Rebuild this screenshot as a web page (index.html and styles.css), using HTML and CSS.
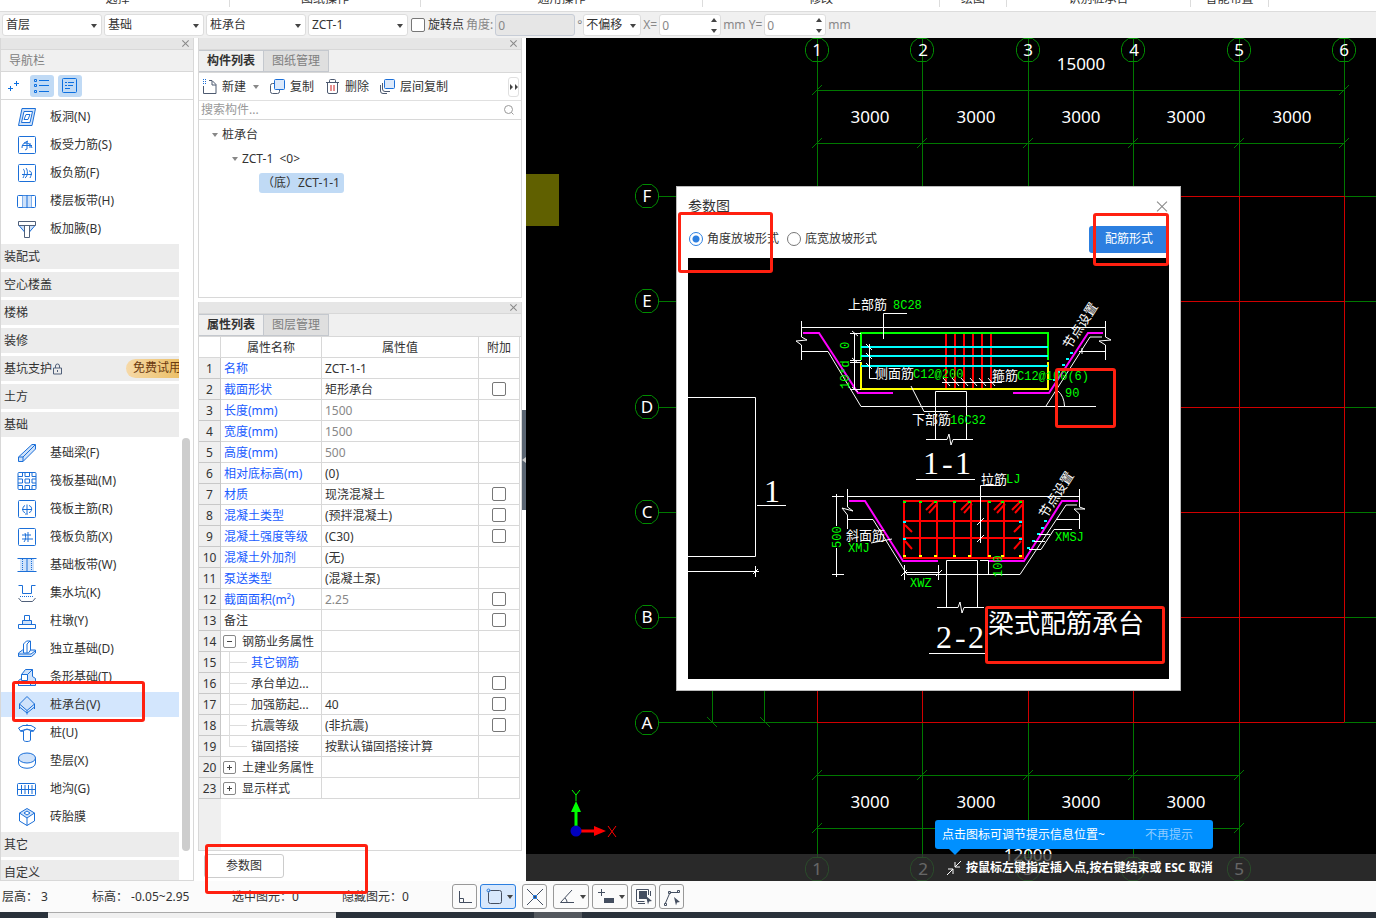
FILE: index.html
```
<!DOCTYPE html>
<html lang="zh-CN">
<head>
    <meta charset="UTF-8">
    <meta name="viewport" content="width=device-width, initial-scale=1.0">
    <title>参数图 - 桩承台</title>
    <link rel="stylesheet" href="styles.css">
</head>
<body>
    <!-- Ribbon group captions -->
    <div class="ribbon">
        <span class="g1">选择</span>
        <span class="g2">图纸操作</span>
        <span class="g3">通用操作</span>
        <span class="g4">修改</span>
        <span class="g5">绘图</span>
        <span class="g6">识别桩承台</span>
        <span class="g7">智能布置</span>
    </div>

    <div class="toolbar">
        <div class="combo"><select aria-label="楼层"><option>首层</option></select></div>
        <div class="combo"><select aria-label="构件类别"><option>基础</option></select></div>
        <div class="combo"><select aria-label="构件类型"><option>桩承台</option></select></div>
        <div class="combo"><select aria-label="构件"><option>ZCT-1</option></select></div>
        <label class="check"><input type="checkbox"> 旋转点</label>
        <label class="muted" for="angle">角度:</label>
        <input class="field angle" type="text" id="angle" value="0" disabled>
        <span class="muted degree">°</span>
        <div class="combo small"><select aria-label="偏移"><option>不偏移</option></select></div>
        <label class="muted" for="offX">X=</label>
        <div class="spin"><input class="field" type="text" id="offX" value="0"></div>
        <label class="muted" for="offY">mm Y=</label>
        <div class="spin"><input class="field" type="text" id="offY" value="0"></div>
        <span class="muted">mm</span>
    </div>

    <div class="main">
        <!-- Navigation -->
        <nav class="nav">
            <div class="strip"><button class="close" aria-label="关闭导航栏"></button></div>
            <div class="nav-title">导航栏</div>
            <div class="nav-tools">
                <button class="tool" aria-label="展开"><svg width="24" height="22" viewBox="0 0 24 22"><path d="M6 13.500h5M8.500 11v5M12 8.500h5M14.500 6v5"/></svg></button>
                <button class="tool on" aria-label="列表"><svg width="24" height="22" viewBox="0 0 24 22"><path d="M9 5.500h10M9 10.500h10M9 16.500h10M4.500 4.500h2v2h-2zM4.500 9.500h2v2h-2zM4.500 15.500h2v2h-2z"/></svg></button>
                <button class="tool on" aria-label="详情"><svg width="24" height="22" viewBox="0 0 24 22"><path d="M5.500 3.500h12a1 1 0 0 1 1 1v12a1 1 0 0 1-1 1h-12a1 1 0 0 1-1-1v-12a1 1 0 0 1 1-1zM7 7.500h2M10 7.500h6M7 10.500h2M10 10.500h5M7 13.500h5"/></svg></button>
            </div>
            <div class="nav-body">
                <ul class="nav-list">
                    <li class="item"><svg class="ico" viewBox="0 0 20 20"><path class="f" d="M5 1.500h13.500L15 18.500H1.500z"/><path class="w" d="M7 4.500h8.500L13 15.500H4.500z"/><path d="M9 7.500h4l-2 5H7z"/></svg>板洞(N)</li>
                    <li class="item"><svg class="ico" viewBox="0 0 20 20"><rect x="1.500" y="1.500" width="17" height="17" rx="1"/><path d="M5 13c0-3 1-5 4-5s5 2 6 5M5 10.500h10M7 8l4-2M10 6v8l-2 1M13 8v5"/></svg>板受力筋(S)</li>
                    <li class="item"><svg class="ico" viewBox="0 0 20 20"><rect x="1.500" y="1.500" width="17" height="17" rx="1"/><path d="M5 11.500h10M6 6c2 1 2 5 0 9M9 5c2 2 2 8-1 10M12 8c3 0 3 3 1 7"/></svg>板负筋(F)</li>
                    <li class="item"><svg class="ico" viewBox="0 0 20 20"><rect x=".5" y="4.500" width="18" height="12" rx="1"/><path class="f" d="M5.500 4.500h9v12h-9z" stroke-dasharray="1 1"/><path d="M10 4v13"/></svg>楼层板带(H)</li>
                    <li class="item"><svg class="ico" viewBox="0 0 20 20"><path class="f" d="M2 6.500l6 7v-7zM18 6.500l-6 7v-7z"/><path class="w dark" d="M1.500 2.500h17v4h-17zM7.500 6.500h5v12h-5z"/></svg>板加腋(B)</li>
                    <li class="group">装配式</li>
                    <li class="group">空心楼盖</li>
                    <li class="group">楼梯</li>
                    <li class="group">装修</li>
                    <li class="group">基坑支护<svg class="lock" viewBox="0 0 12 12"><path d="M1.500 5h8v6h-8zM3.500 5V3a2 2 0 0 1 4 0v2M5.500 7v2"/></svg><span class="trial">免费试用</span></li>
                    <li class="group">土方</li>
                    <li class="group">基础</li>
                    <li class="item"><svg class="ico" viewBox="0 0 20 20"><path class="f" d="M1.500 14L15 1.500h3.500V6L6 18.500H1.500zM1.500 14H6v4.500M6 14L18 2"/></svg>基础梁(F)</li>
                    <li class="item"><svg class="ico" viewBox="0 0 20 20"><rect x="1" y="1.500" width="18" height="17" rx="1"/><path d="M1 5.500h4.500v-4M8 1.500v4h4.500v-4M19 5.500h-4v-4M1 8h4.500v4H1M8 8h4.500v4H8zM19 8h-4v4h4M1 14.500h4.500v4M8 18.500v-4h4.500v4M19 14.500h-4v4"/></svg>筏板基础(M)</li>
                    <li class="item"><svg class="ico" viewBox="0 0 20 20"><rect x="1.500" y="1.500" width="17" height="17" rx="1"/><path d="M5 10.500h10M10 5.500v9M8 6.500c-3 1-3 7 0 7M12 6.500c4 1 3 7 0 7M8 15h3"/></svg>筏板主筋(R)</li>
                    <li class="item"><svg class="ico" viewBox="0 0 20 20"><rect x="1.500" y="1.500" width="17" height="17" rx="1"/><path d="M5 8h9M5 12h11M8 6c1 2 1 7-1 9M11 5v10"/></svg>筏板负筋(X)</li>
                    <li class="item"><svg class="ico" viewBox="0 0 20 20"><path class="f n" d="M3 4h14v13H3z"/><path d="M.5 3.500h19M.5 16.500h19M10 4v12"/><path d="M5.500 4v12M14.500 4v12" stroke-dasharray="1 1"/></svg>基础板带(W)</li>
                    <li class="item"><svg class="ico" viewBox="0 0 20 20"><path d="M1.500 2.500h4v8h9v-8h4"/><path d="M3 13.500h14" stroke-dasharray="1 1"/><path class="dark" d="M1.500 15l3 3.500h11l3-3.500" /></svg>集水坑(K)</li>
                    <li class="item"><svg class="ico" viewBox="0 0 20 20"><path class="w" d="M7.500 4.500h5v5h-5z"/><path class="f" d="M5.500 9.500h9v4h-9z"/><path class="w" d="M1.500 13.500h17v4h-17z"/></svg>柱墩(Y)</li>
                    <li class="item"><svg class="ico" viewBox="0 0 20 20"><path class="f" d="M1.500 14l4-3h13v3l-4 3.500h-13zM2 15h12l4-3"/><path class="w" d="M6.500 14V5l3-3h4v9l-2 3z"/><path d="M10 14V5l3-3"/></svg>独立基础(D)</li>
                    <li class="item"><svg class="ico" viewBox="0 0 20 20"><path class="f" d="M1.500 18.500v-5l3-2V7.500l4-5h7v7l3 2v7z"/><path class="w" d="M4.500 13.500v-6h6v6zM1.500 14.500h12v4h-12z"/><path d="M10.500 7.500l5-5"/></svg>条形基础(T)</li>
                    <li class="item selected"><svg class="ico" viewBox="0 0 20 20"><path class="f" d="M2.500 9L10 1.500 17.500 9 10 15.500z"/><path d="M2.500 9v5M17.500 9v5M10 15.500v4M2.500 12L10 18l7.500-6"/></svg>桩承台(V)</li>
                    <li class="item"><svg class="ico" viewBox="0 0 20 20"><path class="w" d="M1.500 5L6 2.500h8L18.500 5l-2 3h-13z"/><path class="f" d="M3.500 8l6.500-2 6.500 2z"/><path class="w" d="M6.500 8v9c0 2 7 2 7 0V8c-2-2-5-2-7 0z"/><path d="M10 1v2"/></svg>桩(U)</li>
                    <li class="item"><svg class="ico" viewBox="0 0 20 20"><path class="w" d="M1.500 7v5c0 7 17 7 17 0V7z"/><ellipse class="f" cx="10" cy="7" rx="8.500" ry="5"/></svg>垫层(X)</li>
                    <li class="item"><svg class="ico" viewBox="0 0 20 20"><rect x=".5" y="4.500" width="18" height="12" rx="1"/><path d="M1 10.500h17M4.500 6v9M8 6v9M11.500 6v9M15 6v9"/></svg>地沟(G)</li>
                    <li class="item"><svg class="ico" viewBox="0 0 20 20"><path class="f" d="M2.500 6L10 1.500 17.500 6 10 11z"/><path d="M2.500 6v8l7.500 4.500 7.500-4.500V6M10 11v7.500"/><path class="w" d="M7 6l3-2 3 2-3 2z"/></svg>砖胎膜</li>
                    <li class="group">其它</li>
                    <li class="group">自定义</li>
                </ul>
                <div class="scroll"><div class="thumb"></div></div>
            </div>
        </nav>

        <div class="side">
            <!-- Component list -->
            <section class="panel components">
                <div class="strip"><button class="close" aria-label="关闭构件列表"></button></div>
                <div class="tabs"><button class="tab active">构件列表</button><button class="tab">图纸管理</button></div>
                <div class="actions">
                    <button><svg viewBox="0 0 18 18"><path d="M8 2.500h3l4 4v9H2.500V8M11 3v4h4"/><path class="b" d="M2 1.500h4M2 3.500h4M2 5.500h4" stroke-dasharray="1 1"/></svg>新建<i class="caret"></i></button>
                    <button><svg viewBox="0 0 18 18"><path d="M5 5.500H3.500a2 2 0 0 0-2 2v6a2 2 0 0 0 2 2h5a2 2 0 0 0 2-2V12"/><rect class="b" x="5.500" y="1.500" width="10" height="10" rx="1"/></svg>复制</button>
                    <button><svg viewBox="0 0 18 18"><path d="M2 4.500h13M5.500 4V2.500q0-1 1-1h4q1 0 1 1V4M3.500 5v9q0 1.500 1.500 1.500h7q1.500 0 1.500-1.500V5"/><path class="r" d="M7 7v6M10 7v6"/></svg>删除</button>
                    <button><svg viewBox="0 0 18 18"><path d="M1.500 7v6q0 2.500 2.500 2.500h4M3.500 5v6q0 2.500 2.500 2.500h5"/><rect class="b" x="5.500" y="1.500" width="10" height="9" rx="1"/></svg>层间复制</button>
                    <button class="more" aria-label="更多"><svg viewBox="0 0 10 10"><path d="M1 2l3 3-3 3zM6 2l3 3-3 3z"/></svg></button>
                </div>
                <div class="search">
                    <input type="text" placeholder="搜索构件..." aria-label="搜索构件">
                    <svg viewBox="0 0 12 12"><circle cx="5.500" cy="5.500" r="4"/><path d="M8.500 8.500l2 2"/></svg>
                </div>
                <ul class="tree">
                    <li class="l1"><i class="caret"></i>桩承台</li>
                    <li class="l2"><i class="caret"></i>ZCT-1 &nbsp;&lt;0&gt;</li>
                    <li class="l3"><span>（底）ZCT-1-1</span></li>
                </ul>
            </section>

            <!-- Property list -->
            <section class="panel props">
                <div class="strip"><button class="close" aria-label="关闭属性列表"></button></div>
                <div class="tabs"><button class="tab active">属性列表</button><button class="tab">图层管理</button></div>
                <div class="table-wrap">
                    <table>
                        <colgroup><col class="c1"><col class="c2"><col class="c3"><col class="c4"></colgroup>
                        <thead><tr><th></th><th>属性名称</th><th>属性值</th><th>附加</th></tr></thead>
                        <tbody>
                            <tr><td>1</td><td class="key">名称</td><td>ZCT-1-1</td><td></td></tr>
                            <tr><td>2</td><td class="key">截面形状</td><td>矩形承台</td><td><input type="checkbox" aria-label="附加 截面形状"></td></tr>
                            <tr><td>3</td><td class="key">长度(mm)</td><td class="muted">1500</td><td></td></tr>
                            <tr><td>4</td><td class="key">宽度(mm)</td><td class="muted">1500</td><td></td></tr>
                            <tr><td>5</td><td class="key">高度(mm)</td><td class="muted">500</td><td></td></tr>
                            <tr><td>6</td><td class="key">相对底标高(m)</td><td>(0)</td><td></td></tr>
                            <tr><td>7</td><td class="key">材质</td><td>现浇混凝土</td><td><input type="checkbox" aria-label="附加 材质"></td></tr>
                            <tr><td>8</td><td class="key">混凝土类型</td><td>(预拌混凝土)</td><td><input type="checkbox" aria-label="附加 混凝土类型"></td></tr>
                            <tr><td>9</td><td class="key">混凝土强度等级</td><td>(C30)</td><td><input type="checkbox" aria-label="附加 混凝土强度等级"></td></tr>
                            <tr><td>10</td><td class="key">混凝土外加剂</td><td>(无)</td><td></td></tr>
                            <tr><td>11</td><td class="key">泵送类型</td><td>(混凝土泵)</td><td></td></tr>
                            <tr><td>12</td><td class="key">截面面积(m²)</td><td class="muted">2.25</td><td><input type="checkbox" aria-label="附加 截面面积"></td></tr>
                            <tr><td>13</td><td>备注</td><td></td><td><input type="checkbox" aria-label="附加 备注"></td></tr>
                            <tr><td>14</td><td class="parent"><button class="fold minus" aria-label="收起"></button>钢筋业务属性</td><td></td><td></td></tr>
                            <tr><td>15</td><td class="child key">其它钢筋</td><td></td><td></td></tr>
                            <tr><td>16</td><td class="child">承台单边...</td><td></td><td><input type="checkbox" aria-label="附加 承台单边"></td></tr>
                            <tr><td>17</td><td class="child">加强筋起...</td><td>40</td><td><input type="checkbox" aria-label="附加 加强筋起"></td></tr>
                            <tr><td>18</td><td class="child">抗震等级</td><td>(非抗震)</td><td><input type="checkbox" aria-label="附加 抗震等级"></td></tr>
                            <tr><td>19</td><td class="child last">锚固搭接</td><td>按默认锚固搭接计算</td><td></td></tr>
                            <tr><td>20</td><td class="parent"><button class="fold" aria-label="展开"></button>土建业务属性</td><td></td><td></td></tr>
                            <tr><td>23</td><td class="parent"><button class="fold" aria-label="展开"></button>显示样式</td><td></td><td></td></tr>
                        </tbody>
                    </table>
                </div>
                <div class="props-foot"><button class="plain">参数图</button></div>
            </section>
        </div>

        <div class="sash"><div class="grip"></div></div>

        <!-- Drawing area -->
        <div class="canvas">
            <svg class="grid" width="850" height="843" viewBox="526 38 850 843">
                <rect x="526" y="174" width="33" height="52" fill="#606000"/>
                <g class="axis">
                    <path d="M817.500 38V722M922.500 38V722M1028.500 38V722M1133.500 38V722M1239.500 38V722M1344.500 38V722"/>
                    <path d="M817.500 722V857M922.500 722V857M1028.500 722V857M1133.500 722V857M1239.500 722V857"/>
                    <path d="M659 196.500H1376M659 301.500H1376M659 407.500H1376M659 512.500H1376M659 617.500H1376M659 722.500H1376"/>
                    <path d="M817 90.500H1345M817 143.500H1345M817 775.500H1239M817 828.500H1239M712.500 196V722M764.500 196V722"/>
                    <path d="M812 95l10-10M1339 95l10-10M812 148l10-10M917 148l10-10M1023 148l10-10M1128 148l10-10M1234 148l10-10M1339 148l10-10"/>
                    <path d="M812 780l10-10M917 780l10-10M1023 780l10-10M1128 780l10-10M1234 780l10-10M812 833l10-10M1234 833l10-10M707 717l10 10M760 717l10 10"/>
                </g>
                <path class="red" d="M817 196.500H1344M817 301.500H1344M817 407.500H1344M817 512.500H1344M817 617.500H1344M817 722.500H1344M817.500 196V722M922.500 196V722M1028.500 196V722M1133.500 196V722M1239.500 196V722M1344.500 196V722"/>
                <defs><path id="bub" d="M-4.500-11.500h9l5 4 2 5v5l-2 5-5 4h-9l-5-4-2-5v-5l2-5z"/></defs>
                <g class="bubble">
                    <use href="#bub" x="817" y="50"/><use href="#bub" x="922" y="50"/><use href="#bub" x="1028" y="50"/><use href="#bub" x="1133" y="50"/><use href="#bub" x="1239" y="50"/><use href="#bub" x="1344" y="50"/>
                    <use href="#bub" x="647" y="196"/><use href="#bub" x="647" y="301"/><use href="#bub" x="647" y="407"/><use href="#bub" x="647" y="512"/><use href="#bub" x="647" y="617"/><use href="#bub" x="647" y="723"/>
                    <use href="#bub" x="817" y="869"/><use href="#bub" x="922" y="869"/><use href="#bub" x="1028" y="869"/><use href="#bub" x="1133" y="869"/><use href="#bub" x="1239" y="869"/>
                </g>
                <g class="dim">
                    <text x="817" y="56">1</text><text x="923" y="56">2</text><text x="1028" y="56">3</text><text x="1134" y="56">4</text><text x="1239" y="56">5</text><text x="1344" y="56">6</text>
                    <text x="647" y="202">F</text><text x="647" y="307">E</text><text x="647" y="413">D</text><text x="647" y="518">C</text><text x="647" y="623">B</text><text x="647" y="729">A</text>
                    <text x="1081" y="70">15000</text>
                    <text x="870" y="123">3000</text><text x="976" y="123">3000</text><text x="1081" y="123">3000</text><text x="1186" y="123">3000</text><text x="1292" y="123">3000</text>
                    <text x="870" y="808">3000</text><text x="976" y="808">3000</text><text x="1081" y="808">3000</text><text x="1186" y="808">3000</text>
                    <text x="1028" y="861">12000</text>
                    <text x="817" y="875">1</text><text x="923" y="875">2</text><text x="1028" y="875">3</text><text x="1134" y="875">4</text><text x="1239" y="875">5</text>
                </g>
                <!-- UCS icon -->
                <path d="M574.500 831V812H571l5-11 5 11h-3.500v19z" fill="#00ff00"/>
                <path d="M576 829.500h18V826l12 5-12 5v-3.500h-18z" fill="#ff0000"/>
                <circle cx="576" cy="831" r="5.500" fill="#0000c0"/>
                <path d="M572 790l4 5 4-5M576 795v6" stroke="#00ff00" fill="none"/>
                <path d="M608 826l8 11M616 826l-8 11" stroke="#ff0000" fill="none"/>
            </svg>

            <div class="hint-bar">
                <svg viewBox="0 0 16 16"><path d="M15 1L9 7M9 2v5h5M1 15l6-6M2 9h5v5"/></svg>
                按鼠标左键指定插入点,按右键结束或 ESC 取消
            </div>
            <div class="hint-tip"><span>点击图标可调节提示信息位置~</span><button>不再提示</button></div>

            <div class="dialog" role="dialog" aria-label="参数图">
                <div class="dialog-head">参数图<button class="close big" aria-label="关闭"></button></div>
                <div class="dialog-opts">
                    <label><input type="radio" name="slope" checked>角度放坡形式</label>
                    <label><input type="radio" name="slope">底宽放坡形式</label>
                    <button class="primary">配筋形式</button>
                </div>
                <svg class="drawing" viewBox="688 258 481 421">
                    <!-- plan outline -->
                    <path class="wh" d="M688 397.500H755.500V556.500H688M688 571.500H759M755.500 566V577M753 574l5-5M757 505.500H786"/>
                    <text class="big" x="764" y="502">1</text>

                    <!-- section 1-1 -->
                    <path class="wh" d="M801 327.500H1106M801.500 321V337L807 340 796 341 801.500 345V360M801 351.500H828L861 406.500H1096"/>
                    <path class="wh" d="M1105.500 321V337L1111 340 1099 341 1105.500 345V360M1105 351.500H1079M1082 348v6M1046 406L1090 337H1102M1058 391Q1064 396 1064.500 406"/>
                    <path class="mg" d="M803 333H819L858 393H893M1013 393H1049L1088 333H1103"/>
                    <path class="rd" d="M946 333V389M955 333V389M964 333V389M973 333V389M982 333V389M991 333V389"/>
                    <path class="yl" d="M861 362V389H1048V362"/>
                    <path class="gr" d="M861 360V333H1048V360"/>
                    <path class="cy" d="M861 347H1048M861 356H1048M861 366H1048"/>
                    <path class="wh" d="M854.500 333V390M850 333.500H861M850 360.500H861M850 362.500H861M850 389.500H861M852 331l6 5M852 358l6 5M852 387l6 5"/>
                    <path class="wh" d="M883.500 339V313.500H907M869.500 344V378.500H877M866 344l6 6M866 353l6 6M866 363l6 6M911 386L924 411.500H948"/>
                    <path class="wh" d="M942 382.500H1002M943 378l7 8M952 378l7 8M961 378l7 8M970 378l7 8M979 378l7 8M988 378l7 8"/>
                    <path class="wh" d="M935.500 439V391.500H966.500V439M926 439.500H947L949 434 951 445 953 439.500H973M916 479.500H975"/>
                    <path class="pt" d="M1070 353h3M1066 359h3M1062 365h3M1057 372h3M1053 380h3"/>
                    <text x="848" y="309">上部筋</text><text class="val" x="893" y="309">8C28</text>
                    <text x="875" y="378">侧面筋</text><text class="val" x="913" y="378">C12@200</text>
                    <text x="992" y="380">箍筋</text><text class="val" x="1017" y="380">C12@100(6)</text>
                    <text x="912" y="424">下部筋</text><text class="val" x="950" y="424">16C32</text>
                    <text class="val" x="1065" y="397">90</text>
                    <text class="val" transform="translate(849 349) rotate(-90)">0</text>
                    <text class="val" transform="translate(849 389) rotate(-90)">10*d</text>
                    <text transform="translate(1070 350) rotate(-57)">节点设置</text>
                    <text class="big" x="923" y="474">1</text><text class="big" x="942" y="474">-</text><text class="big" x="955" y="474">1</text>

                    <!-- section 2-2 -->
                    <path class="wh" d="M847 496.500H1079M847.500 489V507L853 511 842 508 847.500 515V529M847 519.500H873L907 574.500H1020L1066 505H1077"/>
                    <path class="wh" d="M1079.500 489V507L1085 509 1074 509 1079.500 514V529M1056 519.500H1079M832 496.500H844M832 574.500H844M836.500 494V526M836.500 548V577"/>
                    <path class="mg" d="M849 501H865L903 561H938M988 561H1024L1062 501H1078"/>
                    <path class="rd" d="M904 501H1023V558H904ZM920 501V558M937 501V558M954 501V558M971 501V558M988 501V558M1004 501V558M904 521H1023M904 538H1023"/>
                    <path class="rd" d="M926 510l8-8M929 513l8-9M961 510l8-8M964 513l8-9M994 510l8-8M997 513l8-9M1012 510l8-8M1015 513l8-9M905 525l7 7M905 541l7 8M1021 525l-7 7M1021 541l-7 8"/>
                    <path class="pg" d="M903 502h3M919 502h3M934 502h3M953 502h3M968 502h3M988 502h3M1001 502h3M1019 502h3"/>
                    <path class="py" d="M903 556h3M919 556h3M934 556h3M953 556h3M968 556h3M988 556h3M1001 556h3M1019 556h3"/>
                    <path class="pt" d="M903 522h3M903 539h3M1019 522h3M1019 539h3M1044 521h3M1041 528h3M1037 534h3M1032 541h3M1027 548h3"/>
                    <path class="wh" d="M980.500 543V485.500H1001M977 525l7-7M977 542l7-7M871 543L892 539M904.500 565V580M938.500 565V580M901 576l6-6M936 576l6-6M904 572.500H938"/>
                    <path class="wh" d="M946.500 607V560.500H977.500V607M937 607.500H958L960 602 962 613 964 607.500H984M980 560.500H988.500V575M929 653.500H988"/>
                    <path class="wh" d="M1029 549.500H1041L1054 529.500H1072M1034 541.500H1045M1039 534.500H1050"/>
                    <text x="981" y="484">拉筋</text><text class="val" x="1006" y="483">LJ</text>
                    <text x="846" y="540">斜面筋</text><text class="val" x="848" y="552">XMJ</text>
                    <text class="val" x="910" y="587">XWZ</text><text class="val" x="1055" y="541">XMSJ</text>
                    <text class="val" transform="translate(841 548) rotate(-90)">500</text>
                    <text class="val" transform="translate(1002 577) rotate(-90)">100</text>
                    <text transform="translate(1046 519) rotate(-57)">节点设置</text>
                    <text class="big" x="936" y="648">2</text><text class="big" x="955" y="648">-</text><text class="big" x="968" y="648">2</text>
                    <text class="name" x="988" y="633">梁式配筋承台</text>
                </svg>
                <div class="mark m-slope"></div>
                <div class="mark m-form"></div>
                <div class="mark m-angle"></div>
                <div class="mark m-name"></div>
            </div>
        </div>
        <div class="mark m-nav"></div>
        <div class="mark m-param"></div>
    </div>

    <footer class="status">
        <span class="s1">层高： 3</span>
        <span class="s2">标高： -0.05~2.95</span>
        <span class="s3">选中图元：0</span>
        <span class="s4">隐藏图元：0</span>
        <button aria-label="正交"><svg viewBox="0 0 20 20"><path d="M4.500 4v11.500H17M4.500 11.500h4v4"/></svg></button>
        <button class="wide on" aria-label="捕捉"><svg viewBox="0 0 20 20"><rect x="4.500" y="3.500" width="13" height="13" rx="2"/><circle class="b" cx="4.500" cy="3.500" r="1.500"/></svg><i class="caret"></i></button>
        <button class="gap" aria-label="交点"><svg viewBox="0 0 20 20"><path d="M2 2l16 16M18 2L2 18"/><rect class="b" x="8.500" y="8.500" width="3" height="3"/></svg></button>
        <button class="wide" aria-label="角度"><svg viewBox="0 0 20 20"><path d="M15 3L3.500 15.500H17M8 11q2 2 2 4"/></svg><i class="caret"></i></button>
        <button class="wide" aria-label="输入"><svg viewBox="0 0 20 20"><path d="M2 5.500h7M5.500 2v7"/><path class="s" d="M8 11h10v5H8z"/></svg><i class="caret"></i></button>
        <button aria-label="选择"><svg viewBox="0 0 20 20"><path d="M14.500 8V2.500h-12v12h8M16.500 9V4M4 16.500h7"/><path class="s" d="M5 4h8v8H5zM12 9l6 5-3 .5-1 3z"/></svg></button>
        <button aria-label="折线"><svg viewBox="0 0 20 20"><path d="M3.500 16L8 5.500h8"/><path d="M2.500 16.500h2v2h-2zM6.500 4.500h2v2h-2zM15.500 3.500h2v2h-2z"/><path class="s" d="M12 10l6 5-3 .5-1 3z"/></svg></button>
    </footer>
    <div class="taskbar"><div class="task-open"></div><div class="task-item"></div></div>
</body>
</html>
```

FILE: styles.css
```
* {
    margin: 0;
    padding: 0;
    box-sizing: border-box;
}

body {
    font-family: "Noto Sans", "Noto Sans CJK SC", sans-serif;
    font-size: 12px;
    line-height: 18px;
    color: #333;
    background: #fff;
    height: 100vh;
    display: flex;
    flex-direction: column;
    overflow: hidden;
}

button, input, select {
    font: inherit;
    color: inherit;
}

button {
    border: none;
    background: none;
    white-space: nowrap;
}

ul {
    list-style: none;
}

svg {
    fill: none;
    flex: none;
}

.muted {
    color: #888;
}

/* ribbon captions */
.ribbon {
    display: flex;
    align-items: flex-end;
    height: 12px;
    flex: none;
    overflow: hidden;
    border-bottom: 1px solid #dcdcdc;
}

.ribbon span {
    height: 18px;
    margin-bottom: 4px;
    text-align: center;
    line-height: 20px;
    border-right: 1px solid #dcdcdc;
    flex: none;
}

.ribbon .g1 { width: 230px; padding-left: 6px; }
.ribbon .g2 { width: 191px; }
.ribbon .g3 { width: 282px; }
.ribbon .g4 { width: 237px; }
.ribbon .g5 { width: 67px; }
.ribbon .g6 { width: 184px; }
.ribbon .g7 { width: 78px; }

/* option toolbar */
.toolbar {
    display: flex;
    align-items: center;
    height: 26px;
    flex: none;
    padding: 0 2px;
    gap: 2px;
    background: #f0f0f0;
}

.combo {
    position: relative;
    width: 100px;
    height: 22px;
}

.combo.small {
    width: 58px;
}

.combo select {
    appearance: none;
    width: 100%;
    height: 22px;
    padding: 0 3px;
    background: #fff;
    border: 1px solid #ddd;
    border-radius: 3px;
    color: #333;
}

.combo.small select {
    padding: 0 2px;
}

.combo::after {
    content: "";
    position: absolute;
    right: 5px;
    top: 10px;
    border: 3px solid transparent;
    border-top: 4px solid #444;
    border-bottom: none;
}

input[type="checkbox"] {
    appearance: none;
    width: 14px;
    height: 14px;
    border: 1px solid #777;
    border-radius: 2px;
    background: #fff;
    display: block;
}

.check {
    display: flex;
    align-items: center;
    gap: 3px;
    padding-left: 1px;
    white-space: nowrap;
}

.toolbar .muted {
    white-space: nowrap;
}

.field {
    width: 62px;
    height: 22px;
    padding: 0 2px;
    border: 1px solid #ddd;
    border-radius: 3px;
    background: #fff;
    color: #888;
}

.field.angle {
    width: 80px;
    background: #e6e6e6;
    border-color: #c6ccd6;
}

.degree {
    width: 4px;
}

.spin {
    position: relative;
    height: 22px;
}

.spin::before, .spin::after {
    content: "";
    position: absolute;
    right: 4px;
    border: 3px solid transparent;
}

.spin::before {
    top: 4px;
    border-bottom: 4px solid #444;
    border-top: none;
}

.spin::after {
    bottom: 3px;
    border-top: 4px solid #444;
    border-bottom: none;
}

/* shared panel parts */
.main {
    position: relative;
    display: flex;
    flex: 1;
    min-height: 0;
}

.strip {
    display: flex;
    justify-content: flex-end;
    align-items: center;
    height: 12px;
    flex: none;
    padding-right: 3px;
    background: #e6e6e6;
    border-bottom: 1px solid #d8d8d8;
}

.close {
    position: relative;
    width: 9px;
    height: 9px;
}

.close::before, .close::after {
    content: "";
    position: absolute;
    left: 0;
    right: 0;
    top: 4px;
    border-top: 1px solid #888;
    transform: rotate(45deg);
}

.close::after {
    transform: rotate(-45deg);
}

.close.big {
    width: 14px;
    height: 14px;
}

.close.big::before, .close.big::after {
    top: 7px;
}

.caret {
    display: inline-block;
    border: 3px solid transparent;
    border-top: 4px solid #888;
    border-bottom: none;
}

/* navigation */
.nav {
    display: flex;
    flex-direction: column;
    width: 194px;
    flex: none;
    border: 1px solid #d8d8d8;
    border-top: none;
}

.nav-title {
    height: 22px;
    flex: none;
    padding-left: 8px;
    line-height: 22px;
    color: #808080;
    background: #f0f0f0;
    border-bottom: 1px solid #d8d8d8;
}

.nav-tools {
    display: flex;
    align-items: center;
    gap: 4px;
    height: 28px;
    flex: none;
    padding-left: 1px;
    border-bottom: 1px solid #d8d8d8;
}

.tool {
    width: 24px;
    height: 22px;
    border-radius: 3px;
}

.tool svg {
    display: block;
    stroke: #0b6fe0;
}

.tool.on {
    background: #c0daf5;
}

.nav-body {
    display: flex;
    flex: 1;
    min-height: 0;
    padding-top: 3px;
}

.nav-list {
    width: 178px;
    overflow: hidden;
}

.item, .group {
    display: flex;
    align-items: center;
    height: 25px;
    margin: 1px 0 2px;
}

.item + .item, .group + .group, .group + .item, .item + .group {
    margin-top: 3px;
}

.item {
    gap: 13px;
    padding-left: 16px;
}

.item.selected {
    background: #d3e6fd;
}

.group {
    padding-left: 3px;
    background: #ececec;
}

.ico {
    width: 20px;
    height: 20px;
    stroke: #1b6fd8;
}

.ico .f { fill: #cfe2fa; }
.ico .w { fill: #fff; }
.ico .n { stroke: none; }
.ico .dark { stroke: #50607a; }

.lock {
    width: 12px;
    height: 12px;
    stroke: #50607a;
}

.trial {
    width: 53px;
    height: 19px;
    margin-left: auto;
    padding-left: 7px;
    overflow: hidden;
    white-space: nowrap;
    color: #6b3a10;
    background: linear-gradient(90deg, #f6d9a8, #ecc068);
    border-radius: 10px 0 0 10px;
}

.scroll {
    display: flex;
    flex: 1;
    justify-content: center;
    padding: 335px 1px 29px 0;
}

.thumb {
    width: 8px;
    background: #cdcdcd;
    border-radius: 4px;
}

/* side panels */
.side {
    display: flex;
    flex-direction: column;
    width: 324px;
    flex: none;
    margin-left: 4px;
}

.panel {
    display: flex;
    flex-direction: column;
    border: 1px solid #d8d8d8;
    border-top: none;
}

.components {
    height: 260px;
    flex: none;
}

.props {
    flex: 1;
    min-height: 0;
    margin-top: 4px;
    border-bottom: none;
}

.tabs {
    display: flex;
    height: 23px;
    flex: none;
    background: #f0f0f0;
    border-bottom: 1px solid #d8d8d8;
}

.tab {
    width: 65px;
    color: #808080;
    background: #dfdfdf;
    border: 1px solid #c4c8ce;
    border-left: none;
}

.tab.active {
    font-weight: bold;
    color: #333;
    background: #f0f0f0;
}

.actions {
    display: flex;
    align-items: center;
    gap: 10px;
    height: 28px;
    flex: none;
    padding: 0 2px;
    border-bottom: 1px solid #e0e0e0;
}

.actions button {
    display: flex;
    align-items: center;
    gap: 3px;
}

.actions svg {
    width: 18px;
    height: 18px;
    stroke: #4d5a70;
}

.actions .b {
    stroke: #1b6fd8;
    fill: #dce9fb;
}

.actions .r {
    stroke: #d02020;
}

.actions .caret {
    margin-left: 4px;
}

.actions .more {
    width: 11px;
    height: 20px;
    margin-left: auto;
    justify-content: center;
    border: 1px solid #e0e0e0;
    border-radius: 3px;
}

.actions .more svg {
    width: 10px;
    height: 10px;
    fill: #444;
    stroke: none;
}

.search {
    display: flex;
    align-items: center;
    height: 19px;
    flex: none;
    padding-right: 6px;
    border-bottom: 1px solid #d8d8d8;
}

.search input {
    flex: 1;
    height: 18px;
    padding-left: 2px;
    border: none;
    outline: none;
}

.search input::placeholder {
    color: #999;
}

.search svg {
    width: 12px;
    height: 12px;
    stroke: #999;
}

.tree {
    padding-top: 3px;
}

.tree li {
    display: flex;
    align-items: center;
    gap: 4px;
    height: 24px;
}

.tree .l1 { padding-left: 13px; }
.tree .l2 { padding-left: 33px; }
.tree .l3 { padding-left: 60px; }

.tree span {
    height: 20px;
    padding: 0 4px 0 3px;
    line-height: 20px;
    background: #c0daf5;
    border-radius: 3px;
}

.table-wrap {
    flex: 1;
    min-height: 0;
    border-bottom: 1px solid #d8d8d8;
    background: linear-gradient(90deg, #efefef 22px, #fff 22px);
}

table {
    width: 321px;
    table-layout: fixed;
    border-collapse: separate;
    border-spacing: 0;
    background: #fff;
}

.c1 { width: 22px; }
.c2 { width: 101px; }
.c3 { width: 157px; }
.c4 { width: 41px; }

th, td {
    height: 21px;
    padding: 2px 3px 0;
    line-height: 18px;
    font-weight: normal;
    white-space: nowrap;
    border-right: 1px solid #d8d8d8;
    border-bottom: 1px solid #d8d8d8;
}

td:first-child {
    padding: 2px 0 0;
    text-align: center;
    background: #efefef;
    border-color: #c8c8c8;
}

td.key {
    color: #1a5cff;
}

td input[type="checkbox"] {
    margin: 0 auto;
}

td:last-child {
    padding: 0 3px;
}

.parent .fold {
    position: relative;
    width: 13px;
    height: 13px;
    margin: 0 6px 0 -1px;
    border: 1px solid #888;
    border-radius: 2px;
    vertical-align: -1px;
}

.fold::before, .fold::after {
    content: "";
    position: absolute;
    left: 3px;
    top: 5px;
    width: 5px;
    height: 1px;
    background: #444;
}

.fold::after {
    transform: rotate(90deg);
}

.fold.minus::after {
    display: none;
}

td.child {
    position: relative;
    padding-left: 30px;
}

.child::before {
    content: "";
    position: absolute;
    left: 8px;
    top: 0;
    width: 17px;
    height: 10px;
    border-left: 1px solid #ddd;
    border-bottom: 1px solid #ddd;
}

.child::after {
    content: "";
    position: absolute;
    left: 8px;
    top: 10px;
    height: 11px;
    border-left: 1px solid #ddd;
}

.child.last::after {
    display: none;
}

.props-foot {
    height: 30px;
    flex: none;
    margin: 0 -1px;
    padding: 3px 6px;
    background: #fff;
}

.plain {
    width: 80px;
    height: 24px;
    background: #fff;
    border: 1px solid #ccc;
    border-radius: 3px;
}

.sash {
    display: flex;
    align-items: center;
    width: 4px;
    flex: none;
}

.grip {
    display: flex;
    align-items: center;
    width: 4px;
    height: 100px;
    background: #5b6673;
}

.grip::before {
    content: "";
    border: 3px solid transparent;
    border-right: 4px solid #ccc;
    border-left: none;
}

/* drawing area */
.canvas {
    position: relative;
    flex: 1;
    overflow: hidden;
    background: #000;
}

.grid {
    display: block;
}

.axis {
    stroke: #007800;
}

.red {
    stroke: #d00000;
}

.bubble {
    stroke: #008c00;
}

.dim text {
    font-size: 17px;
    fill: #fff;
    text-anchor: middle;
}

.hint-bar {
    position: absolute;
    left: 0;
    right: 0;
    bottom: 0;
    display: flex;
    align-items: center;
    gap: 4px;
    height: 27px;
    padding-left: 420px;
    font-weight: bold;
    color: #fff;
    white-space: nowrap;
    background: rgba(54, 54, 54, 0.76);
}

.hint-bar svg {
    width: 16px;
    height: 16px;
    stroke: #fff;
}

.hint-tip {
    position: absolute;
    left: 409px;
    bottom: 32px;
    display: flex;
    align-items: center;
    justify-content: space-between;
    width: 278px;
    height: 29px;
    padding: 0 20px 0 7px;
    color: #fff;
    background: #0090ff;
    border-radius: 3px;
}

.hint-tip::after {
    content: "";
    position: absolute;
    left: 14px;
    top: 29px;
    border: 6px solid transparent;
    border-top-color: #0090ff;
    border-bottom: none;
}

.hint-tip button {
    color: #8fccff;
}

.dialog {
    position: absolute;
    left: 150px;
    top: 148px;
    width: 505px;
    padding: 0 11px 11px;
    background: #fff;
    border: 1px solid #bbb;
}

.dialog-head {
    display: flex;
    align-items: center;
    justify-content: space-between;
    height: 37px;
    font-size: 14px;
}

.dialog-opts {
    display: flex;
    align-items: center;
    gap: 7px;
    height: 30px;
    margin-bottom: 4px;
}

.dialog-opts label {
    display: flex;
    align-items: center;
    gap: 4px;
    padding-left: 1px;
}

.dialog-opts input {
    appearance: none;
    width: 14px;
    height: 14px;
    border: 1px solid #777;
    border-radius: 50%;
    background: #fff;
}

.dialog-opts input:checked {
    border-color: #2c7fe0;
    background: radial-gradient(circle, #2c7fe0 3px, #fff 4px);
}

.primary {
    width: 80px;
    height: 27px;
    margin-left: auto;
    color: #fff;
    background: #2c7fe0;
    border-radius: 3px;
}

.drawing {
    display: block;
    width: 100%;
    background: #000;
}

.drawing text {
    font-size: 13px;
    fill: #fff;
}

.drawing .val {
    font-family: "Liberation Mono", monospace;
    font-size: 12px;
    fill: #00ff00;
}

.drawing .big {
    font-family: "Liberation Serif", serif;
    font-size: 32px;
}

.drawing .name {
    font-size: 26px;
}

.wh { stroke: #fff; }
.mg { stroke: #ff00ff; stroke-width: 2; }
.rd { stroke: #ff0000; stroke-width: 2; }
.gr { stroke: #00ff00; stroke-width: 2; }
.yl { stroke: #ffff00; stroke-width: 2; }
.cy { stroke: #00ffff; stroke-width: 2; }
.pt { stroke: #00ffff; stroke-width: 2; }
.pg { stroke: #00ff00; stroke-width: 2; }
.py { stroke: #ffff00; stroke-width: 2; }

/* red highlight frames */
.mark {
    position: absolute;
    border: 3px solid #ff2010;
    border-radius: 3px;
    pointer-events: none;
}

.m-slope { left: 1px; top: 25px; width: 95px; height: 61px; }
.m-form { left: 416px; top: 26px; width: 76px; height: 53px; }
.m-angle { left: 378px; top: 181px; width: 61px; height: 60px; }
.m-name { left: 308px; top: 419px; width: 180px; height: 58px; }
.m-nav { left: 12px; top: 643px; width: 133px; height: 41px; }
.m-param { left: 205px; top: 806px; width: 163px; height: 50px; z-index: 1; }

/* status bar */
.status {
    display: flex;
    align-items: center;
    gap: 3px;
    height: 31px;
    flex: none;
    padding-left: 2px;
    background: #fbfbfb;
}

.status span {
    flex: none;
    white-space: nowrap;
}

.s1 { width: 87px; }
.s2 { width: 137px; }
.s3 { width: 107px; }
.s4 { width: 107px; }

.status button {
    display: flex;
    align-items: center;
    justify-content: center;
    width: 25px;
    height: 25px;
    flex: none;
    border: 1px solid #999;
    border-radius: 3px;
}

.status button.wide {
    width: 36px;
    gap: 3px;
}

.status .on {
    background: #d8e8fc;
    border-color: #2c7fe0;
}

.status .gap {
    margin: 0 3px;
}

.status svg {
    width: 20px;
    height: 20px;
    stroke: #444e60;
}

.status .s { fill: #444e60; stroke: none; }
.status .b { stroke: #2c7fe0; }

.status .caret {
    border-top-color: #444;
}

.taskbar {
    display: flex;
    height: 6px;
    flex: none;
    padding-left: 48px;
    background: #2a323b;
}

.task-open {
    width: 288px;
    background: #f0f0f0;
    border-top: 1px solid #aaa;
}

.task-item {
    width: 48px;
    margin-left: 198px;
    background: #53585e;
}
```
